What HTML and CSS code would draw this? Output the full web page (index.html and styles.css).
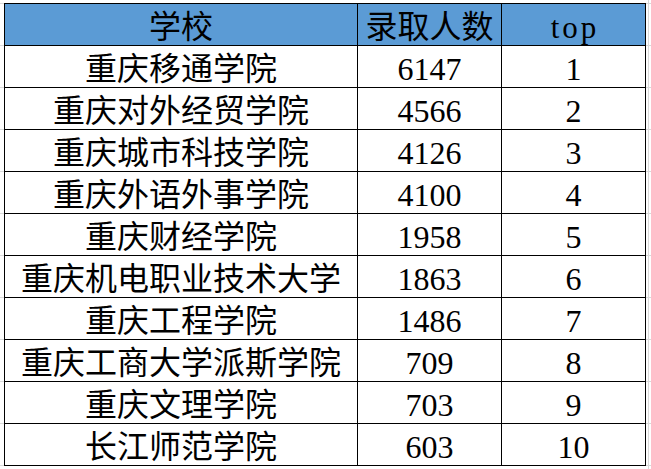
FILE: index.html
```html
<!DOCTYPE html>
<html lang="zh-CN">
<head>
<meta charset="utf-8">
<title>录取人数</title>
<link rel="stylesheet" href="styles.css">
</head>
<body>
<div class="sheet">
  <div class="grid">
    <div class="cell head">学校</div>
    <div class="cell head">录取人数</div>
    <div class="cell head latin">top</div>

    <div class="cell">重庆移通学院</div>
    <div class="cell">6147</div>
    <div class="cell">1</div>

    <div class="cell">重庆对外经贸学院</div>
    <div class="cell">4566</div>
    <div class="cell">2</div>

    <div class="cell">重庆城市科技学院</div>
    <div class="cell">4126</div>
    <div class="cell">3</div>

    <div class="cell">重庆外语外事学院</div>
    <div class="cell">4100</div>
    <div class="cell">4</div>

    <div class="cell">重庆财经学院</div>
    <div class="cell">1958</div>
    <div class="cell">5</div>

    <div class="cell">重庆机电职业技术大学</div>
    <div class="cell">1863</div>
    <div class="cell">6</div>

    <div class="cell">重庆工程学院</div>
    <div class="cell">1486</div>
    <div class="cell">7</div>

    <div class="cell">重庆工商大学派斯学院</div>
    <div class="cell">709</div>
    <div class="cell">8</div>

    <div class="cell">重庆文理学院</div>
    <div class="cell">703</div>
    <div class="cell">9</div>

    <div class="cell">长江师范学院</div>
    <div class="cell">603</div>
    <div class="cell">10</div>
  </div>
</div>
</body>
</html>
```
FILE: styles.css
```css
html, body {
  margin: 0;
  padding: 0;
  background: #ffffff;
}

body {
  width: 651px;
  height: 469px;
  overflow: hidden;
  font-family: "Liberation Serif", "Noto Sans CJK SC", serif;
  color: #000;
  background-color: #ffffff;
  background-image:
    linear-gradient(to right, transparent 648px, #d9d9d9 648px, #d9d9d9 649px, transparent 649px),
    repeating-linear-gradient(to bottom, transparent 0, transparent 3px, #d9d9d9 3px, #d9d9d9 4px, transparent 4px, transparent 42px);
}

.sheet {
  padding: 3px 0 0 4px;
}

.grid {
  display: grid;
  grid-template-columns: 353px 144px 144px;
  grid-auto-rows: 42px;
  width: max-content;
  border-top: 1px solid #000;
  border-left: 1px solid #000;
  background: #fff;
}

.cell {
  box-sizing: border-box;
  border-right: 1px solid #000;
  border-bottom: 1px solid #000;
  text-align: center;
  font-size: 32px;
  line-height: 35px;
  padding-top: 6px;
  white-space: nowrap;
  overflow: hidden;
}

.head {
  background: #5b9bd5;
}

.latin {
  font-size: 31px;
  letter-spacing: 3px;
  text-indent: 3px;
}
```
